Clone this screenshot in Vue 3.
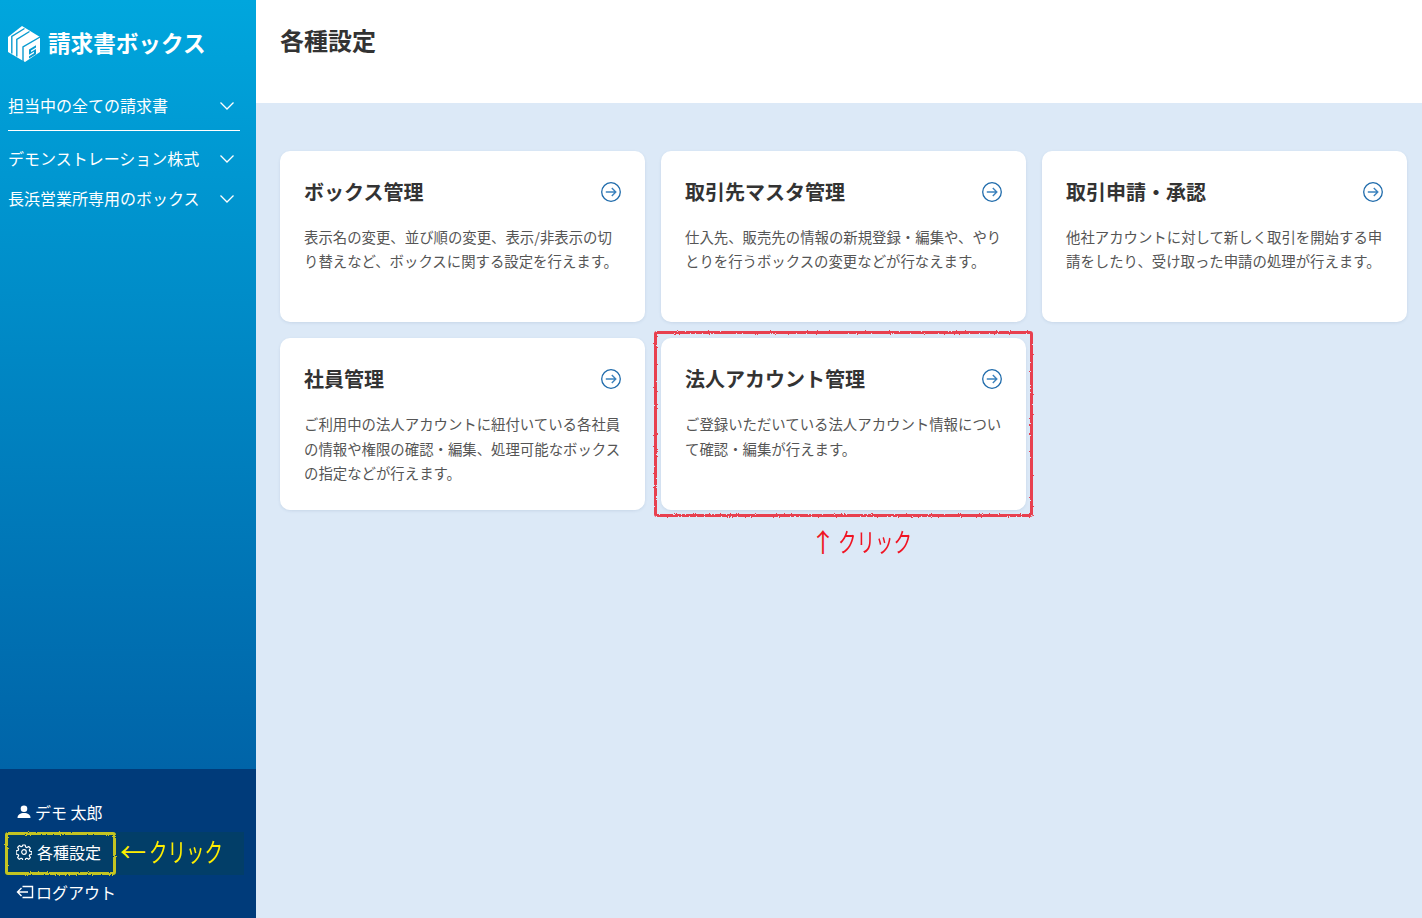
<script setup>
const mainNav = [{ label: '担当中の全ての請求書' }];
const subNav = [{ label: 'デモンストレーション株式' }, { label: '長浜営業所専用のボックス' }];

const cards = [
  { title: 'ボックス管理', text: '表示名の変更、並び順の変更、表示/非表示の切り替えなど、ボックスに関する設定を行えます。' },
  { title: '取引先マスタ管理', text: '仕入先、販売先の情報の新規登録・編集や、やりとりを行うボックスの変更などが行なえます。' },
  { title: '取引申請・承認', text: '他社アカウントに対して新しく取引を開始する申請をしたり、受け取った申請の処理が行えます。' },
  { title: '社員管理', text: 'ご利用中の法人アカウントに紐付いている各社員の情報や権限の確認・編集、処理可能なボックスの指定などが行えます。' },
  { title: '法人アカウント管理', text: 'ご登録いただいている法人アカウント情報について確認・編集が行えます。', marked: true }
];
</script>

<template>
  <div class="layout">
    <svg class="filter-defs" aria-hidden="true">
      <filter id="rough" x="-5%" y="-5%" width="110%" height="110%">
        <feTurbulence type="fractalNoise" baseFrequency="0.9" numOctaves="2" seed="3" />
        <feDisplacementMap in="SourceGraphic" scale="2.5" />
      </filter>
    </svg>

    <aside class="sidebar">
      <div class="sidebar-top">
        <div class="logo">
          <svg class="logo-mark" viewBox="0 0 32 36" aria-hidden="true">
            <path d="M14 0 32 11v15L17 36 0 26V11Z" fill="#fff" />
            <path d="M16.500 2.500 3.800 10.500v17" fill="none" stroke="#0a9bd0" stroke-width="1.400" />
            <path d="M21.500 5.500 8.800 13.500v17" fill="none" stroke="#0a9bd0" stroke-width="1.400" />
            <path d="M32 11 15 21v15" fill="none" stroke="#0a9bd0" stroke-width="1.400" />
            <path d="M21 23.500l7-4.200v2.200l-5 3v1.500l5-3v5.300l-7 4.200v-2.200l5-3v-1.500l-5 3Z" fill="#0a9bd0" />
          </svg>
          <span>請求書ボックス</span>
        </div>

        <nav class="nav-main">
          <a v-for="item in mainNav" :key="item.label" class="nav-item">
            <span>{{ item.label }}</span>
            <svg class="chevron" viewBox="0 0 16 16"><path d="M1.500 5.500l6.500 6.500 6.500-6.500" /></svg>
          </a>
        </nav>
        <nav class="nav-sub">
          <a v-for="item in subNav" :key="item.label" class="nav-item">
            <span>{{ item.label }}</span>
            <svg class="chevron" viewBox="0 0 16 16"><path d="M1.500 5.500l6.500 6.500 6.500-6.500" /></svg>
          </a>
        </nav>
      </div>

      <div class="sidebar-bottom">
        <a class="user-link">
          <svg class="user-icon" viewBox="0 0 16 16" fill="#fff">
            <circle cx="8" cy="4.800" r="3.300" />
            <path d="M1.500 14c0-3.300 2.800-5 6.500-5s6.500 1.700 6.500 5Z" />
          </svg>
          <span>デモ 太郎</span>
        </a>
        <a class="user-link">
          <svg class="user-icon gear-icon" viewBox="0 0 16 16" fill="none" stroke="#fff" stroke-width="1.200">
            <circle cx="8" cy="8" r="2.300" />
            <path d="M6.800 1h2.400l.4 2 1.300.6 1.800-1.100 1.700 1.700-1.100 1.800.6 1.300 2 .4v2.400l-2 .4-.6 1.300 1.100 1.800-1.700 1.700-1.800-1.100-1.300.6-.4 2H6.800l-.4-2-1.300-.6-1.800 1.100-1.700-1.700 1.100-1.800-.6-1.300-2-.4V6.800l2-.4.6-1.300-1.100-1.800 1.700-1.700 1.800 1.100 1.300-.6Z" stroke-linejoin="round" />
          </svg>
          <span>各種設定</span>
        </a>
        <a class="user-link">
          <svg class="logout-icon" viewBox="0 0 18 16" fill="none" stroke="#fff" stroke-width="1.400">
            <path d="M6.500 2.500h10v11h-10" />
            <path d="M12 8H1.500M5.500 4 1.500 8l4 4" />
          </svg>
          <span>ログアウト</span>
        </a>

        <div class="settings-note">
          <div class="settings-box"></div>
          <div class="settings-hint"><span class="hint-arrow">←</span><span class="hint-kana">クリック</span></div>
        </div>
      </div>
    </aside>

    <main class="content">
      <header class="page-header">
        <h1>各種設定</h1>
      </header>

      <section class="card-grid">
        <article v-for="card in cards" :key="card.title" class="card" :class="{ marked: card.marked }">
          <div class="card-head">
            <h2>{{ card.title }}</h2>
            <svg class="card-arrow" viewBox="0 0 20 20" fill="none">
              <circle cx="10" cy="10" r="9.300" stroke="#1f6bab" stroke-width="1.300" />
              <path d="M4.800 10h10M10.800 6l4 4-4 4" stroke="#3b82bd" stroke-width="1.400" />
            </svg>
          </div>
          <p>{{ card.text }}</p>
          <template v-if="card.marked">
            <div class="mark-frame"></div>
            <div class="mark-hint"><span class="mark-arrow">↑</span><span class="mark-kana">クリック</span></div>
          </template>
        </article>
      </section>
    </main>
  </div>
</template>

<style>
html,
body {
  margin: 0;
  padding: 0;
}
</style>

<style scoped>
.layout {
  display: flex;
  height: 918px;
  overflow: hidden;
  font-family: "Noto Sans CJK JP", "Noto Sans", sans-serif;
}

.filter-defs {
  position: absolute;
  width: 0;
  height: 0;
}

.sidebar {
  display: flex;
  flex-direction: column;
  flex: 0 0 256px;
  color: #fff;
}

.sidebar-top {
  flex: 1;
  padding: 24px 16px 0 8px;
  background: linear-gradient(180deg, #00a6dd 0%, #0064a8 100%);
}

.logo {
  display: flex;
  align-items: center;
  gap: 8px;
  height: 40px;
  font-size: 22.600px;
  font-weight: 700;
  white-space: nowrap;
}

.logo span {
  margin-bottom: 4px;
}

.logo-mark {
  width: 32px;
  height: 36px;
  margin-top: -1px;
}

.nav-main {
  margin-top: 21px;
  padding-bottom: 5px;
  border-bottom: 1px solid #fff;
}

.nav-sub {
  margin-top: 7px;
}

.nav-item {
  display: flex;
  align-items: center;
  justify-content: space-between;
  height: 40px;
  font-size: 16px;
  white-space: nowrap;
}

.chevron {
  width: 16px;
  height: 16px;
  margin-right: 5px;
  fill: none;
  stroke: #fff;
  stroke-width: 1.300;
}

.sidebar-bottom {
  position: relative;
  display: flex;
  flex-direction: column;
  flex: 0 0 149px;
  padding: 23px 0 5px 16px;
  box-sizing: border-box;
  background: #003b7a;
}

.user-link {
  position: relative;
  z-index: 1;
  display: flex;
  align-items: center;
  gap: 3px;
  height: 40px;
  font-size: 16px;
}

.user-icon {
  width: 16px;
  height: 16px;
}

.gear-icon {
  margin-right: 2px;
}

.logout-icon {
  width: 18px;
  height: 16px;
  margin-right: -1px;
}

.settings-note {
  position: absolute;
  top: 63px;
  left: 5px;
  display: flex;
  align-items: center;
  width: 239px;
  height: 43px;
  background: #023e68;
}

.settings-box {
  box-sizing: border-box;
  flex: 0 0 111px;
  height: 43px;
  border: 3px solid #c4c421;
  border-radius: 3px;
  filter: url(#rough);
}

.settings-hint {
  display: flex;
  align-items: center;
  margin: 0 0 5px 4px;
  color: #ffee00;
  font-size: 26px;
  line-height: 36px;
  white-space: nowrap;
}

.hint-arrow {
  width: 29px;
}

.hint-kana,
.mark-kana {
  display: inline-block;
  transform: scaleX(0.71);
  transform-origin: left center;
}

.content {
  flex: 1;
  background: #dce9f7;
}

.page-header {
  height: 103px;
  padding: 22px 24px 0;
  box-sizing: border-box;
  background: #fff;
}

.page-header h1 {
  margin: 0;
  color: #333;
  font-size: 24px;
  font-weight: 700;
  line-height: 36px;
}

.card-grid {
  display: grid;
  grid-template-columns: repeat(3, 365px);
  grid-auto-rows: 171.450px;
  gap: 16px;
  padding: 48px 0 0 24px;
}

.card {
  position: relative;
  padding: 24px;
  box-sizing: border-box;
  background: #fff;
  border-radius: 10px;
  box-shadow: 0 1px 3px rgba(60, 90, 130, 0.12);
}

.card-head {
  display: flex;
  align-items: center;
  justify-content: space-between;
  height: 34px;
}

.card h2 {
  margin: 0 0 2px;
  color: #333;
  font-size: 20px;
  font-weight: 700;
}

.card-arrow {
  width: 20px;
  height: 20px;
}

.card p {
  margin: 16px 0 0;
  color: #555;
  font-size: 14.400px;
  line-height: 1.700;
}

.mark-frame {
  position: absolute;
  inset: -7px;
  border: 3px solid #e8414f;
  border-radius: 3px;
  filter: url(#rough);
}

.mark-hint {
  position: absolute;
  top: 184px;
  left: 149px;
  display: flex;
  align-items: center;
  color: #f01423;
  font-size: 26px;
  line-height: 38px;
  white-space: nowrap;
}

.mark-arrow {
  width: 28px;
}
</style>
